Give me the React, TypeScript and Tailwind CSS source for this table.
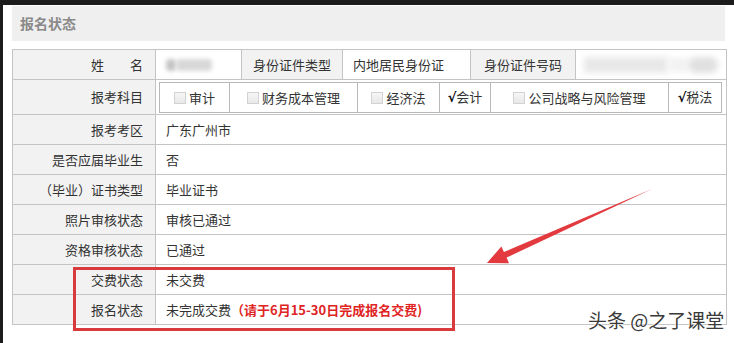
const cjk = "font-['Microsoft_YaHei','Noto_Sans_CJK_SC',sans-serif]";

const labelCell = 'h-[30px] border border-[#c4c4c4] bg-[#f2f2f2] pr-3 text-right font-normal';
const valueCell = 'h-[30px] border border-[#c4c4c4] pl-[10px] text-left';

const subjects = [
  { name: '审计', checked: false },
  { name: '财务成本管理', checked: false },
  { name: '经济法', checked: false },
  { name: '会计', checked: true },
  { name: '公司战略与风险管理', checked: false },
  { name: '税法', checked: true },
];

const rows: { label: string; value: React.ReactNode }[] = [
  { label: '报考考区', value: '广东广州市' },
  { label: '是否应届毕业生', value: '否' },
  { label: '（毕业）证书类型', value: '毕业证书' },
  { label: '照片审核状态', value: '审核已通过' },
  { label: '资格审核状态', value: '已通过' },
  { label: '交费状态', value: '未交费' },
  {
    label: '报名状态',
    value: (
      <>
        未完成交费
        <span className="font-bold text-[#e02424]">（请于6月15-30日完成报名交费)</span>
      </>
    ),
  },
];

function Checkbox() {
  return (
    <span className="mr-[3px] inline-block h-[12px] w-[12px] border border-[#d2d2d2] bg-gradient-to-b from-[#f6f6f6] to-[#e8e8e8] align-[-1px]" />
  );
}

function SubjectTable() {
  return (
    <table className="w-[562px] table-fixed border-collapse">
      <colgroup>
        <col className="w-[70px]" />
        <col className="w-[128px]" />
        <col className="w-[82px]" />
        <col className="w-[51px]" />
        <col className="w-[178px]" />
        <col className="w-[53px]" />
      </colgroup>
      <tbody>
        <tr>
          {subjects.map((s) => (
            <td key={s.name} className="h-[30px] border border-[#b8b8b8] text-center whitespace-nowrap">
              {s.checked ? (
                <span className="font-['DejaVu_Sans',sans-serif] font-bold text-[#111]">√</span>
              ) : (
                <Checkbox />
              )}
              {s.name}
            </td>
          ))}
        </tr>
      </tbody>
    </table>
  );
}

export default function App() {
  return (
    <div className={`relative min-h-screen overflow-hidden bg-white text-[13px] text-[#333] ${cjk}`}>
      <div className="min-h-screen border-l-[3px] border-t-[5px] border-[#1c1c1c] pl-[9px] pr-[9px] pt-px">
        <div className="flex h-[35px] items-center bg-[#efefef] pl-2 text-[14px] font-bold text-[#8a8a8a]">
          报名状态
        </div>

        <table className="mt-2 w-[714px] table-fixed border-collapse">
          <colgroup>
            <col className="w-[143px]" />
            <col className="w-[86px]" />
            <col className="w-[101px]" />
            <col className="w-[128px]" />
            <col className="w-[105px]" />
            <col className="w-[151px]" />
          </colgroup>
          <tbody>
            <tr>
              <th className={labelCell}>姓　　名</th>
              <td className={valueCell}>
                <div className="flex items-center">
                  <div className="h-[12px] w-[10px] rounded-sm bg-[#c4c4c4] blur-[2px]" />
                  <div className="h-[12px] w-[36px] rounded-sm bg-[#d8d8d8] blur-[2px]" />
                </div>
              </td>
              <td className="h-[30px] border border-[#c4c4c4] bg-[#f2f2f2] text-center">身份证件类型</td>
              <td className={valueCell}>内地居民身份证</td>
              <td className="h-[30px] border border-[#c4c4c4] bg-[#f2f2f2] text-center">身份证件号码</td>
              <td className="h-[30px] border border-[#c4c4c4] pl-2">
                <div className="flex items-center">
                  <div className="h-[16px] w-[84px] bg-[#e8e8e8] blur-[3px]" />
                  <div className="h-[14px] w-[20px] bg-[#f2f2f2] blur-[3px]" />
                  <div className="h-[16px] w-[30px] rounded-full bg-[#e0e0e0] blur-[3px]" />
                </div>
              </td>
            </tr>
            <tr>
              <th className="h-[35px] border border-[#c4c4c4] bg-[#f2f2f2] pr-3 text-right font-normal">报考科目</th>
              <td colSpan={5} className="border border-[#c4c4c4] px-[3px] pt-[2px] pb-px">
                <SubjectTable />
              </td>
            </tr>
            {rows.map((r) => (
              <tr key={r.label}>
                <th className={labelCell}>{r.label}</th>
                <td colSpan={5} className={valueCell}>
                  {r.value}
                </td>
              </tr>
            ))}
          </tbody>
        </table>
      </div>

      {/* highlight box around the fee rows */}
      <div className="pointer-events-none absolute left-[73px] top-[267px] h-[64px] w-[382px] border-[3px] border-[#d93a3c]" />

      {/* pointer arrow */}
      <svg className="pointer-events-none absolute left-0 top-0" width="734" height="343" viewBox="0 0 734 343">
        <polygon
          points="652,189 506.6,257.6 509,263.2 487,263 501.4,246.4 503.9,252 "
          fill="#e23a3f"
        />
      </svg>

      <div className="pointer-events-none absolute left-[588px] top-[310px] text-[19px] leading-none text-[#3a3a3a] [text-shadow:0_0_2px_#fff,0_0_2px_#fff]">
        头条 @之了课堂
      </div>
    </div>
  );
}
